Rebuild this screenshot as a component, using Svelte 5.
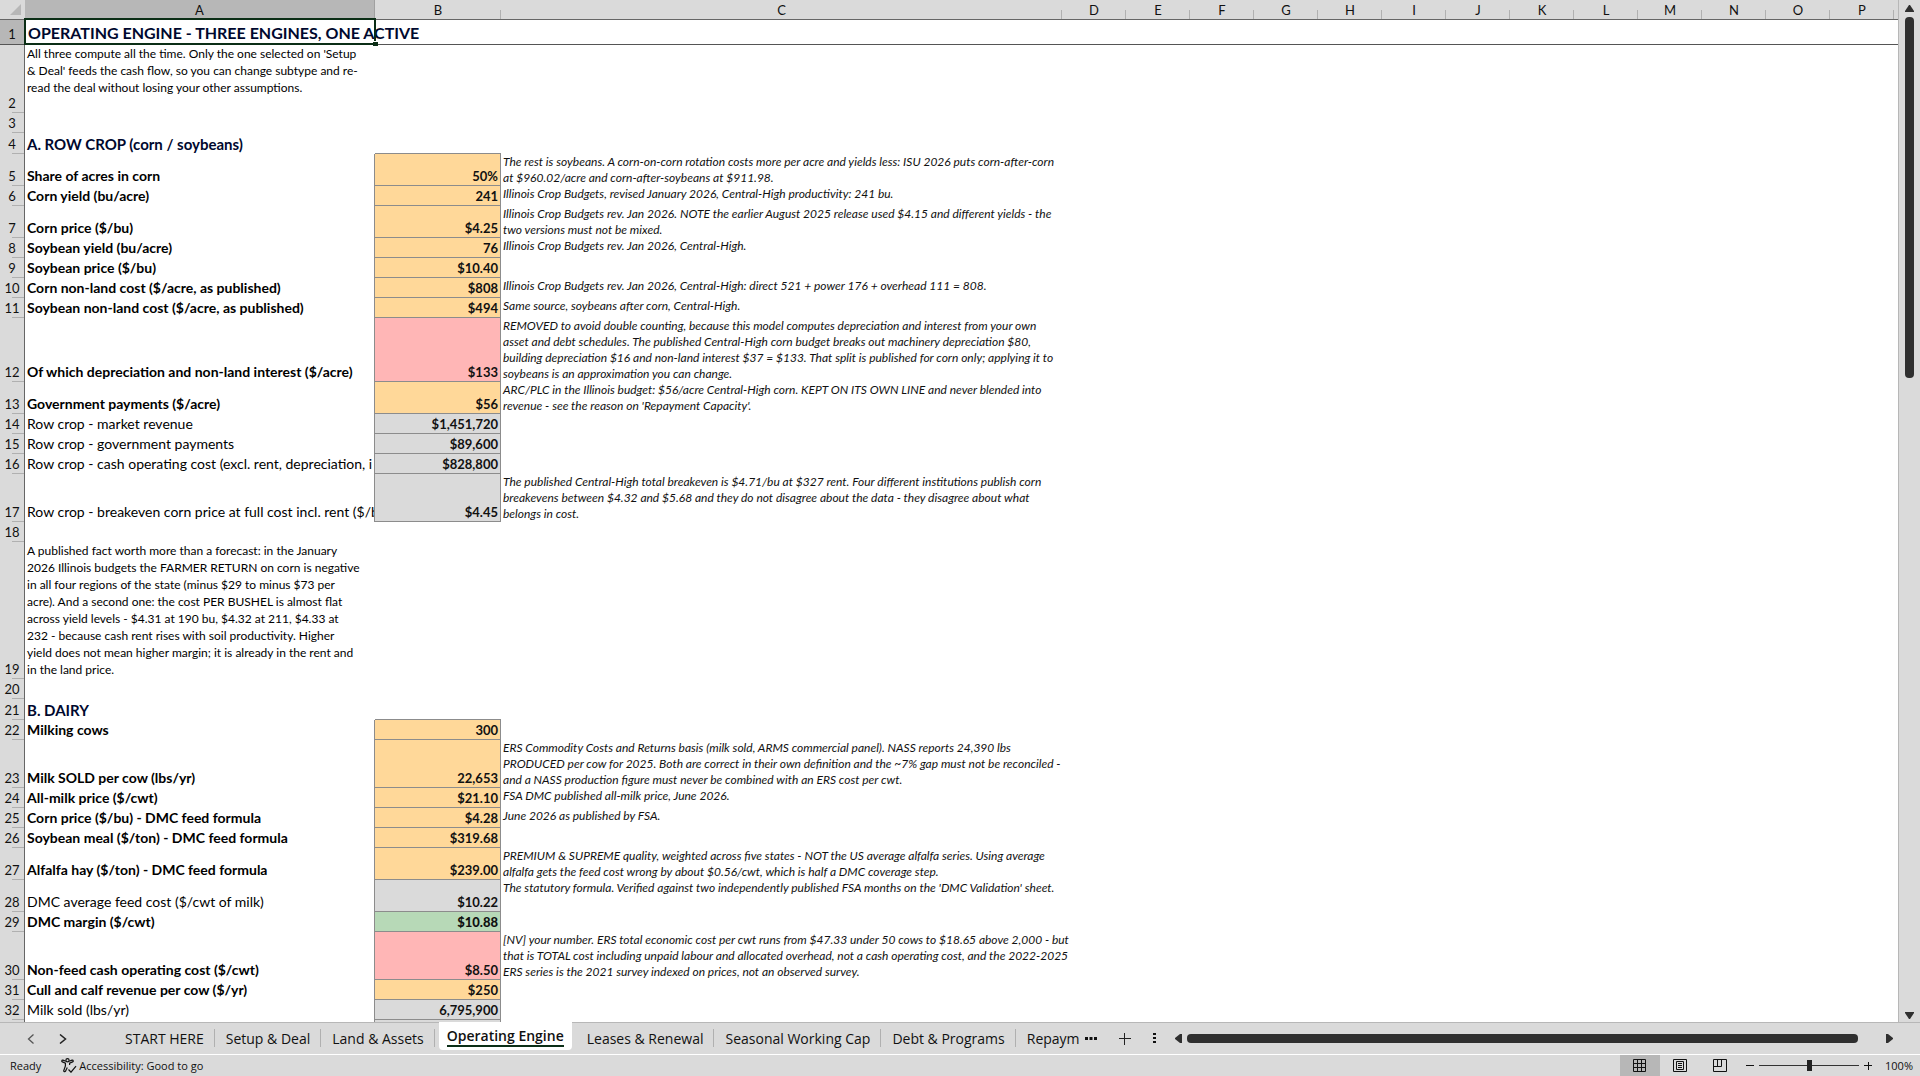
<script lang="ts">
  type Row = {
    h: number;
    label?: string;
    kind?: 'title' | 'section' | 'text' | 'bold';
    value?: string;
    fill?: 'input' | 'warn' | 'calc' | 'good';
    note?: string;
  };

  const columns = ['D', 'E', 'F', 'G', 'H', 'I', 'J', 'K', 'L', 'M', 'N', 'O', 'P'];

  const rows: Row[] = [
    { h: 25, label: 'OPERATING ENGINE - THREE ENGINES, ONE ACTIVE', kind: 'title' },
    {
      h: 68,
      kind: 'text',
      label:
        "All three compute all the time. Only the one selected on 'Setup\n& Deal' feeds the cash flow, so you can change subtype and re-\nread the deal without losing your other assumptions."
    },
    { h: 20 },
    { h: 21, label: 'A. ROW CROP (corn / soybeans)', kind: 'section' },
    {
      h: 32, label: 'Share of acres in corn', kind: 'bold', value: '50%', fill: 'input',
      note: 'The rest is soybeans. A corn-on-corn rotation costs more per acre and yields less: ISU 2026 puts corn-after-corn\nat $960.02/acre and corn-after-soybeans at $911.98.'
    },
    {
      h: 20, label: 'Corn yield (bu/acre)', kind: 'bold', value: '241', fill: 'input',
      note: 'Illinois Crop Budgets, revised January 2026, Central-High productivity: 241 bu.'
    },
    {
      h: 32, label: 'Corn price ($/bu)', kind: 'bold', value: '$4.25', fill: 'input',
      note: 'Illinois Crop Budgets rev. Jan 2026. NOTE the earlier August 2025 release used $4.15 and different yields - the\ntwo versions must not be mixed.'
    },
    {
      h: 20, label: 'Soybean yield (bu/acre)', kind: 'bold', value: '76', fill: 'input',
      note: 'Illinois Crop Budgets rev. Jan 2026, Central-High.'
    },
    { h: 20, label: 'Soybean price ($/bu)', kind: 'bold', value: '$10.40', fill: 'input' },
    {
      h: 20, label: 'Corn non-land cost ($/acre, as published)', kind: 'bold', value: '$808', fill: 'input',
      note: 'Illinois Crop Budgets rev. Jan 2026, Central-High: direct 521 + power 176 + overhead 111 = 808.'
    },
    {
      h: 20, label: 'Soybean non-land cost ($/acre, as published)', kind: 'bold', value: '$494', fill: 'input',
      note: 'Same source, soybeans after corn, Central-High.'
    },
    {
      h: 64, label: 'Of which depreciation and non-land interest ($/acre)', kind: 'bold', value: '$133', fill: 'warn',
      note: 'REMOVED to avoid double counting, because this model computes depreciation and interest from your own\nasset and debt schedules. The published Central-High corn budget breaks out machinery depreciation $80,\nbuilding depreciation $16 and non-land interest $37 = $133. That split is published for corn only; applying it to\nsoybeans is an approximation you can change.'
    },
    {
      h: 32, label: 'Government payments ($/acre)', kind: 'bold', value: '$56', fill: 'input',
      note: "ARC/PLC in the Illinois budget: $56/acre Central-High corn. KEPT ON ITS OWN LINE and never blended into\nrevenue - see the reason on 'Repayment Capacity'."
    },
    { h: 20, label: 'Row crop - market revenue', value: '$1,451,720', fill: 'calc' },
    { h: 20, label: 'Row crop - government payments', value: '$89,600', fill: 'calc' },
    { h: 20, label: 'Row crop - cash operating cost (excl. rent, depreciation, i', value: '$828,800', fill: 'calc' },
    {
      h: 48, label: 'Row crop - breakeven corn price at full cost incl. rent ($/b', value: '$4.45', fill: 'calc',
      note: 'The published Central-High total breakeven is $4.71/bu at $327 rent. Four different institutions publish corn\nbreakevens between $4.32 and $5.68 and they do not disagree about the data - they disagree about what\nbelongs in cost.'
    },
    { h: 20 },
    {
      h: 137,
      kind: 'text',
      label:
        'A published fact worth more than a forecast: in the January\n2026 Illinois budgets the FARMER RETURN on corn is negative\nin all four regions of the state (minus $29 to minus $73 per\nacre). And a second one: the cost PER BUSHEL is almost flat\nacross yield levels - $4.31 at 190 bu, $4.32 at 211, $4.33 at\n232 - because cash rent rises with soil productivity. Higher\nyield does not mean higher margin; it is already in the rent and\nin the land price.'
    },
    { h: 20 },
    { h: 21, label: 'B. DAIRY', kind: 'section' },
    { h: 20, label: 'Milking cows', kind: 'bold', value: '300', fill: 'input' },
    {
      h: 48, label: 'Milk SOLD per cow (lbs/yr)', kind: 'bold', value: '22,653', fill: 'input',
      note: 'ERS Commodity Costs and Returns basis (milk sold, ARMS commercial panel). NASS reports 24,390 lbs\nPRODUCED per cow for 2025. Both are correct in their own definition and the ~7% gap must not be reconciled -\nand a NASS production figure must never be combined with an ERS cost per cwt.'
    },
    {
      h: 20, label: 'All-milk price ($/cwt)', kind: 'bold', value: '$21.10', fill: 'input',
      note: 'FSA DMC published all-milk price, June 2026.'
    },
    {
      h: 20, label: 'Corn price ($/bu) - DMC feed formula', kind: 'bold', value: '$4.28', fill: 'input',
      note: 'June 2026 as published by FSA.'
    },
    { h: 20, label: 'Soybean meal ($/ton) - DMC feed formula', kind: 'bold', value: '$319.68', fill: 'input' },
    {
      h: 32, label: 'Alfalfa hay ($/ton) - DMC feed formula', kind: 'bold', value: '$239.00', fill: 'input',
      note: 'PREMIUM & SUPREME quality, weighted across five states - NOT the US average alfalfa series. Using average\nalfalfa gets the feed cost wrong by about $0.56/cwt, which is half a DMC coverage step.'
    },
    {
      h: 32, label: 'DMC average feed cost ($/cwt of milk)', value: '$10.22', fill: 'calc',
      note: "The statutory formula. Verified against two independently published FSA months on the 'DMC Validation' sheet."
    },
    { h: 20, label: 'DMC margin ($/cwt)', kind: 'bold', value: '$10.88', fill: 'good' },
    {
      h: 48, label: 'Non-feed cash operating cost ($/cwt)', kind: 'bold', value: '$8.50', fill: 'warn',
      note: '[NV] your number. ERS total economic cost per cwt runs from $47.33 under 50 cows to $18.65 above 2,000 - but\nthat is TOTAL cost including unpaid labour and allocated overhead, not a cash operating cost, and the 2022-2025\nERS series is the 2021 survey indexed on prices, not an observed survey.'
    },
    { h: 20, label: 'Cull and calf revenue per cow ($/yr)', kind: 'bold', value: '$250', fill: 'input' },
    { h: 20, label: 'Milk sold (lbs/yr)', value: '6,795,900', fill: 'calc' }
  ];

  const tabs = [
    'START HERE',
    'Setup & Deal',
    'Land & Assets',
    'Operating Engine',
    'Leases & Renewal',
    'Seasonal Working Cap',
    'Debt & Programs'
  ];

  let active = $state('Operating Engine');
  let zoom = $state(100);
</script>

<div class="app">
  <main class="workspace">
    <div class="sheet">
      <table>
        <colgroup>
          <col class="col-num" />
          <col class="col-a" />
          <col class="col-b" />
          <col class="col-c" />
          {#each columns as c (c)}
            <col class="col-std" />
          {/each}
          <col />
        </colgroup>
        <thead>
          <tr>
            <th class="corner" aria-label="Select all">
              <svg width="11" height="11" viewBox="0 0 11 11"><path d="M11 0V11H0Z" fill="#b7b7b7" /></svg>
            </th>
            <th class="selected" scope="col">A</th>
            <th scope="col">B</th>
            <th scope="col">C</th>
            {#each columns as c (c)}
              <th scope="col">{c}</th>
            {/each}
            <th class="filler"></th>
          </tr>
        </thead>
        <tbody>
          {#each rows as row, i}
            <tr style:height="{row.h}px" class:frozen={i === 0}>
              <th class="num" class:selected={i === 0} scope="row">{i + 1}</th>
              <td class="label {row.kind ?? ''}" class:edged={row.fill}>
                {#if row.label}<div class="cell-text">{row.label}</div>{/if}
              </td>
              <td class="value {row.fill ?? ''}" class:above={rows[i + 1]?.fill && !row.fill}>{row.value ?? ''}</td>
              <td class="note">{row.note ?? ''}</td>
              <td colspan={columns.length + 1}></td>
            </tr>
          {/each}
          <tr class="partial">
            <th class="num"></th>
            <td class="edged"></td>
            <td class="value calc"></td>
            <td></td>
            <td colspan={columns.length + 1}></td>
          </tr>
        </tbody>
      </table>
    </div>
    <div class="vscroll">
      <button aria-label="Scroll up">
        <svg width="9" height="7" viewBox="0 0 9 7"><path d="M4 0h1l4 6v1H0V6Z" /></svg>
      </button>
      <div class="vtrack"><div class="vthumb"></div></div>
      <button aria-label="Scroll down">
        <svg width="9" height="7" viewBox="0 0 9 7"><path d="M4 7h1l4-6V0H0v1Z" /></svg>
      </button>
    </div>
  </main>

  <nav class="tabbar" aria-label="Sheets">
    <div class="tab-nav">
      <button aria-label="Previous sheet">
        <svg width="8" height="10" viewBox="0 0 8 10"><path d="M6.5 .5 1.5 5l5 4.5" stroke="#555" stroke-width="1.3" fill="none" /></svg>
      </button>
      <button aria-label="Next sheet">
        <svg width="8" height="10" viewBox="0 0 8 10"><path d="M1 .5 6.5 5 1 9.5" stroke="#222" stroke-width="1.5" fill="none" /></svg>
      </button>
    </div>
    <div class="tabs">
      {#each tabs as tab (tab)}
        <button class="tab" class:active={tab === active} onclick={() => (active = tab)}>
          <span>{tab}</span>
        </button>
      {/each}
      <button class="tab cut"><span>Repaym</span></button>
    </div>
    <div class="tab-tools">
      <button aria-label="More sheets">
        <svg width="12" height="3" viewBox="0 0 12 3"><path d="M0 0h3v3H0zM4.5 0h3v3h-3zM9 0h3v3H9z" fill="#111" /></svg>
      </button>
      <button aria-label="New sheet">
        <svg width="12" height="12" viewBox="0 0 12 12"><path d="M5.5 0v12M0 5.5h12" stroke="#222" /></svg>
      </button>
      <button aria-label="Resize tabs">
        <svg width="3" height="11" viewBox="0 0 3 11"><path d="M0 0h3v2H0zM0 4h3v2H0zM0 8h3v2H0z" fill="#111" /></svg>
      </button>
    </div>
    <div class="hscroll">
      <button aria-label="Scroll left">
        <svg width="7" height="9" viewBox="0 0 7 9"><path d="M0 4v1l5 4h2V0H5Z" /></svg>
      </button>
      <div class="hthumb"></div>
      <button aria-label="Scroll right">
        <svg width="7" height="9" viewBox="0 0 7 9"><path d="M7 4v1L2 9H0V0h2Z" /></svg>
      </button>
    </div>
  </nav>

  <footer class="status">
    <span class="ready">Ready</span>
    <button class="access">
      <svg width="16" height="15" viewBox="0 0 16 15" fill="none" stroke="#111" stroke-width="1.2">
        <circle cx="6.5" cy="2.2" r="1.6" />
        <path d="M4.8 3.2 2 2.2C.6 1.9.4 3.5 1.4 3.9L4.4 5.2V8L2.8 12.5c-.3 1.2 1.2 1.6 1.7.7L6.3 9.5M8.2 3.2 11 2.2c1.4-.3 1.6 1.3.6 1.7L8.6 5.2V7" />
        <path d="m7.5 11.5 2.5 2.7 5-6" />
      </svg>
      <span>Accessibility: Good to go</span>
    </button>
    <div class="views">
      <button class="on" aria-label="Normal view">
        <svg width="14" height="14" viewBox="0 0 14 14" fill="none" stroke="#111"><path d="M.5 .5h12v12H.5zM4.5 .5v12M8.5 .5v12M.5 4.5h12M.5 8.5h12" /></svg>
      </button>
      <button aria-label="Page layout">
        <svg width="14" height="14" viewBox="0 0 14 14" fill="none" stroke="#111"><path d="M.5 .5h13v12H.5zM3.5 2.5h7v8h-7zM5 4.5h4M5 6.5h4M5 8.5h4" /></svg>
      </button>
      <button aria-label="Page break preview">
        <svg width="14" height="14" viewBox="0 0 14 14" fill="none" stroke="#111"><path d="M.5 .5h13v12H.5zM.5 7.5h8v-7M4.5 .5v7" /></svg>
      </button>
    </div>
    <div class="zoom">
      <button aria-label="Zoom out" onclick={() => (zoom -= 10)}>
        <svg width="8" height="8" viewBox="0 0 8 8"><path d="M0 3.5h8" stroke="#111" /></svg>
      </button>
      <input type="range" min="10" max="190" bind:value={zoom} aria-label="Zoom" />
      <button aria-label="Zoom in" onclick={() => (zoom += 10)}>
        <svg width="8" height="8" viewBox="0 0 8 8"><path d="M0 3.5h8M4.5 0v8" stroke="#111" /></svg>
      </button>
      <span class="percent">{zoom}%</span>
    </div>
  </footer>
</div>

<style>
  :global(body) {
    margin: 0;
  }

  .app {
    display: flex;
    flex-direction: column;
    height: 100vh;
    overflow: hidden;
    background: #dadada;
    color: #111;
    font-family: Lato, 'Liberation Sans', sans-serif;
    font-size: 13px;
  }

  button {
    display: flex;
    align-items: center;
    justify-content: center;
    padding: 0;
    border: 0;
    background: none;
    color: inherit;
    font: inherit;
  }

  svg {
    display: block;
    flex-shrink: 0;
  }

  .workspace {
    display: flex;
    flex: 1;
    min-height: 0;
  }

  .sheet {
    flex: 1;
    min-width: 0;
    overflow: hidden;
    background: #fff;
    border-right: 1px solid #b7b7b7;
  }

  table {
    width: 100%;
    table-layout: fixed;
    border-collapse: separate;
    border-spacing: 0;
  }

  .col-num {
    width: 25px;
  }

  .col-a {
    width: 350px;
  }

  .col-b {
    width: 126px;
  }

  .col-c {
    width: 561px;
  }

  .col-std {
    width: 64px;
  }

  th,
  td {
    box-sizing: border-box;
    padding: 0;
    line-height: 16px;
  }

  th {
    background: #dadada;
    font-weight: 400;
  }

  thead th {
    height: 20px;
    border-bottom: 1px solid #666;
    background: linear-gradient(#b0b0b0, #b0b0b0) right bottom / 1px 9px no-repeat #dadada;
  }

  thead th.selected {
    background: #b7b7b7;
    border-right: 1px solid #a0a0a0;
  }

  thead .corner,
  thead .filler {
    background: #dadada;
  }

  .corner svg {
    margin-left: 10px;
  }

  .num {
    padding-bottom: 2px;
    border-right: 1px solid #666;
    background: linear-gradient(#b0b0b0, #b0b0b0) right bottom / 12px 1px no-repeat #dadada;
    vertical-align: bottom;
  }

  .num.selected {
    background: #b7b7b7;
  }

  .label {
    padding: 0 0 2px 2px;
    vertical-align: bottom;
    white-space: nowrap;
    overflow: hidden;
    color: #000;
    font-size: 14px;
  }

  .label.bold {
    font-weight: 700;
  }

  .label.section {
    color: #00082e;
    font-size: 15px;
    font-weight: 700;
  }

  .label.text {
    padding-bottom: 0;
    font-size: 12px;
    vertical-align: top;
    white-space: pre;
  }

  .text .cell-text {
    line-height: 17px;
  }

  .label.title {
    position: relative;
    padding: 2px 0 0 3px;
    overflow: visible;
    color: #00082e;
    font-size: 16px;
    font-weight: 700;
    vertical-align: middle;
  }

  /* selection frame and its fill handle */
  .title::before {
    content: '';
    position: absolute;
    inset: -2px -1px -1px -1px;
    border: 2px solid #0b2e16;
  }

  .title::after {
    content: '';
    position: absolute;
    right: -3px;
    bottom: -2px;
    width: 5px;
    height: 4px;
    border-top: 1px solid #fff;
    background: #0b2e16;
  }

  .frozen td,
  .frozen th {
    border-bottom: 1px solid #555;
  }

  .edged {
    border-right: 1px solid #8c8c8c;
  }

  .value {
    padding: 0 2px 1px 0;
    text-align: right;
    vertical-align: bottom;
    font-weight: 700;
    color: #111;
  }

  .above {
    border-bottom: 1px solid #8c8c8c;
  }

  .input,
  .warn,
  .calc,
  .good {
    border-right: 1px solid #8c8c8c;
    border-bottom: 1px solid #8c8c8c;
  }

  .input {
    background: #ffd899;
  }

  .warn {
    background: #ffb6b6;
  }

  .calc {
    background: #dadada;
  }

  .good {
    background: #b7d9b7;
    font-weight: 900;
  }

  .note {
    padding-left: 2px;
    vertical-align: top;
    white-space: pre;
    font-size: 12px;
    font-style: italic;
    color: #111;
  }

  .partial {
    height: 20px;
  }

  .vscroll {
    display: flex;
    flex-direction: column;
    align-items: center;
    width: 21px;
    padding: 5px 0 3px;
    box-sizing: border-box;
    fill: #2f2f2f;
  }

  .vtrack {
    flex: 1;
    padding: 5px 0;
  }

  .vthumb {
    width: 9px;
    height: 36.5%;
    border-radius: 4px;
    background: #2f2f2f;
  }

  .tabbar {
    display: flex;
    align-items: center;
    height: 31px;
    border-top: 1px solid #b7b7b7;
    border-bottom: 1px solid #fff;
    font-family: 'Open Sans', 'Noto Sans', sans-serif;
    font-size: 14px;
  }

  .tab-nav {
    display: flex;
    gap: 24px;
    padding: 0 47px 0 27px;
  }

  .tabs {
    display: flex;
    align-self: stretch;
  }

  .tab {
    padding: 0 11px;
    position: relative;
  }

  .tab::after {
    content: '';
    position: absolute;
    right: 0;
    top: 6px;
    height: 18px;
    border-right: 1px solid #b0b0b0;
  }

  .tab.active {
    align-self: flex-start;
    height: 28px;
    margin: -1px 4px 0;
    padding: 0 8px;
    border-radius: 0 0 4px 4px;
    background: #fff;
    font-weight: 600;
  }

  .tab.active::after,
  .tab.cut::after {
    border: 0;
  }

  .tab.active span {
    line-height: 19px;
    border-bottom: 2px solid #0b2e16;
  }

  .tab.cut {
    padding-right: 5px;
  }

  .tab-tools {
    display: flex;
    align-items: center;
    gap: 22px;
  }

  .hscroll {
    display: flex;
    align-items: center;
    flex: 1;
    padding: 0 27px 0 19px;
    fill: #2f2f2f;
  }

  .hthumb {
    flex: 1;
    height: 9px;
    margin: 0 28px 0 5px;
    border-radius: 4px;
    background: #2f2f2f;
  }

  .status {
    display: flex;
    align-items: center;
    height: 21px;
    font-family: 'Open Sans', 'Noto Sans', sans-serif;
    font-size: 11px;
  }

  .ready {
    padding-left: 10px;
  }

  .access {
    gap: 2px;
    margin-left: 20px;
  }

  .views {
    display: flex;
    align-self: stretch;
    margin-left: auto;
  }

  .views button {
    width: 40px;
  }

  .views .on {
    background: #b7b7b7;
  }

  .zoom {
    display: flex;
    align-items: center;
    gap: 5px;
    padding: 0 7px 0 6px;
  }

  .zoom input {
    width: 100px;
    height: 11px;
    margin: 0;
    appearance: none;
    background: linear-gradient(#333, #333) center / 100% 1px no-repeat;
  }

  .zoom input::-webkit-slider-thumb {
    appearance: none;
    width: 5px;
    height: 11px;
    background: #222;
  }

  .percent {
    width: 28px;
    margin-left: 8px;
    text-align: right;
  }
</style>
